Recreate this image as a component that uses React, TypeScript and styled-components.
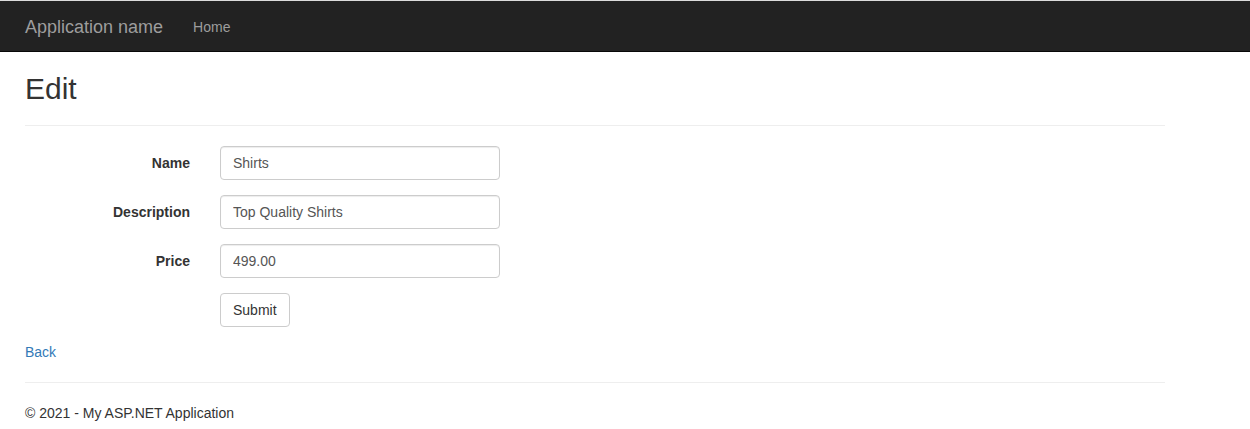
import React from "react";
import styled, { createGlobalStyle } from "styled-components";

const GlobalStyle = createGlobalStyle`
  html, body { margin: 0; padding: 0; background: #fff; }
  body {
    font-family: "Liberation Sans", Arial, Helvetica, sans-serif;
    font-size: 14px;
    line-height: 1.42857143;
    color: #333;
  }
  * { box-sizing: border-box; }
`;

const Page = styled.div`
  border-top: 1px solid #dcdcdc;
`;

const Navbar = styled.nav`
  background: #222;
  border-bottom: 1px solid #080808;
  min-height: 50px;
`;

const NavInner = styled.div`
  width: 1170px;
  margin-left: 10px;
  padding: 2px 15px 0;
  display: flex;
  align-items: center;
  height: 50px;
`;

const Brand = styled.a`
  font-size: 18px;
  line-height: 20px;
  color: #9d9d9d;
  text-decoration: none;
`;

const NavLink = styled.a`
  font-size: 14px;
  line-height: 20px;
  color: #9d9d9d;
  text-decoration: none;
  padding: 0 15px;
  margin-left: 15px;
`;

const Container = styled.div`
  width: 1170px;
  margin-left: 10px;
  padding: 0 15px;
`;

const Title = styled.h2`
  font-size: 30px;
  font-weight: 500;
  line-height: 1.1;
  margin: 20px 0 10px;
`;

const Rule = styled.hr`
  border: 0;
  border-top: 1px solid #eee;
  margin: 20px 0;
  height: 0;
`;

const Form = styled.form`
  display: flex;
  flex-direction: column;
  gap: 15px;
  margin-bottom: 15px;
`;

const Row = styled.div`
  display: grid;
  grid-template-columns: 195px 1fr;
  margin: 0 -15px;
`;

const Label = styled.label`
  padding: 7px 15px 0;
  text-align: right;
  font-weight: 700;
  line-height: 20px;
`;

const Field = styled.div`
  padding: 0 15px;
`;

const Input = styled.input`
  display: block;
  width: 100%;
  max-width: 280px;
  height: 34px;
  padding: 6px 12px;
  font-family: inherit;
  font-size: 14px;
  line-height: 1.42857143;
  color: #555;
  background: #fff;
  border: 1px solid #ccc;
  border-radius: 4px;
  box-shadow: inset 0 1px 1px rgba(0, 0, 0, 0.075);
  outline: none;
`;

const Button = styled.button`
  height: 34px;
  padding: 6px 12px;
  font-family: inherit;
  font-size: 14px;
  line-height: 1.42857143;
  color: #333;
  background: #fff;
  border: 1px solid #ccc;
  border-radius: 4px;
  cursor: pointer;
`;

const LinkRow = styled.div`
  line-height: 20px;
`;

const TextLink = styled.a`
  color: #337ab7;
  text-decoration: none;
`;

const Footer = styled.footer`
  p { margin: 0 0 10px; }
`;

const fields = [
  { label: "Name", value: "Shirts" },
  { label: "Description", value: "Top Quality Shirts" },
  { label: "Price", value: "499.00" },
];

export default function App() {
  return (
    <Page>
      <GlobalStyle />
      <Navbar>
        <NavInner>
          <Brand href="#">Application name</Brand>
          <NavLink href="#">Home</NavLink>
        </NavInner>
      </Navbar>
      <Container>
        <Title>Edit</Title>
        <Rule />
        <Form onSubmit={(e) => e.preventDefault()}>
          {fields.map((f) => (
            <Row key={f.label}>
              <Label>{f.label}</Label>
              <Field>
                <Input defaultValue={f.value} />
              </Field>
            </Row>
          ))}
          <Row>
            <div />
            <Field>
              <Button type="submit">Submit</Button>
            </Field>
          </Row>
        </Form>
        <LinkRow>
          <TextLink href="#">Back</TextLink>
        </LinkRow>
        <Rule />
        <Footer>
          <p>© 2021 - My ASP.NET Application</p>
        </Footer>
      </Container>
    </Page>
  );
}
